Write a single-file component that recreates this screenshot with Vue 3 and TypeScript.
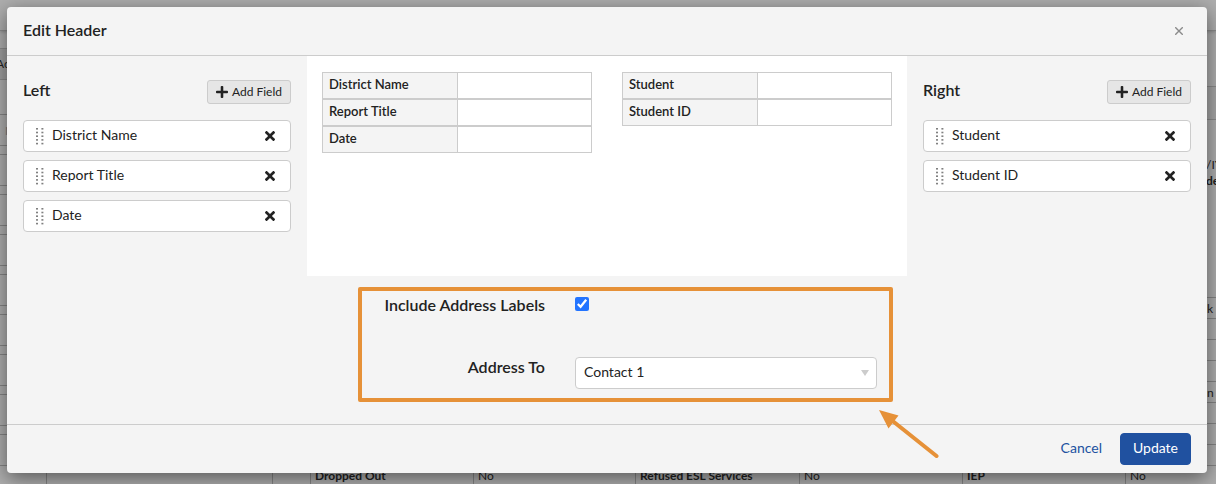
<script setup lang="ts">
import { ref } from 'vue'

interface Side {
  title: string
  fields: string[]
}

const left = ref<Side>({ title: 'Left', fields: ['District Name', 'Report Title', 'Date'] })
const right = ref<Side>({ title: 'Right', fields: ['Student', 'Student ID'] })
const includeLabels = ref(true)
const addressTo = ref('Contact 1')

const leftCells = ['N', '', '', '', '', '', '', '', '']
const rightCells = ['k', '', '', '', 'n .', '', '', '']

function removeField(side: Side, index: number): void {
  side.fields.splice(index, 1)
}

function addField(side: Side): void {
  side.fields.push('Date')
}
</script>

<template>
  <div class="page">
    <div class="underlay" aria-hidden="true">
      <div class="topbar"></div>
      <div class="behind">
        <div class="behind-left">
          <div class="behind-head">Ac</div>
          <div v-for="(cell, i) in leftCells" :key="i" class="left-cell">{{ cell }}</div>
        </div>
        <div class="behind-right">
          <div class="right-head"></div>
          <div class="right-info">/IY<br /><b>de</b></div>
          <div v-for="(cell, i) in rightCells" :key="i" class="right-cell">{{ cell }}</div>
        </div>
      </div>
      <div class="behind-row">
        <span class="blank-a"></span>
        <span class="blank-b"></span>
        <span class="blank-c"></span>
        <b>Dropped Out</b><span>No</span>
        <b>Refused ESL Services</b><span>No</span>
        <b>IEP</b><span>No</span>
      </div>
    </div>

    <div class="modal" role="dialog" aria-labelledby="dialog-title">
      <header class="modal-header">
        <h1 id="dialog-title">Edit Header</h1>
        <button class="close" type="button" aria-label="Close">
          <svg viewBox="0 0 8 8" width="8" height="8"><path d="M0.2 0.2 7.8 7.8M7.8 0.2 0.2 7.8" /></svg>
        </button>
      </header>

      <div class="modal-body">
        <section v-for="side in [left, right]" :key="side.title" class="side" :class="side.title.toLowerCase()">
          <div class="side-head">
            <h2>{{ side.title }}</h2>
            <button class="add" type="button" @click="addField(side)">
              <svg viewBox="0 32 448 448" width="12" height="12">
                <path d="M416 208H272V64c0-17.67-14.33-32-32-32h-32c-17.67 0-32 14.33-32 32v144H32c-17.67 0-32 14.33-32 32v32c0 17.67 14.33 32 32 32h144v144c0 17.67 14.33 32 32 32h32c17.67 0 32-14.33 32-32V304h144c17.67 0 32-14.33 32-32v-32c0-17.67-14.33-32-32-32z" />
              </svg>
              <span>Add Field</span>
            </button>
          </div>
          <ul class="fields">
            <li v-for="(field, i) in side.fields" :key="field">
              <svg class="grip" viewBox="0 0 8 17" width="8" height="17">
                <template v-for="row in 5" :key="row">
                  <rect x="0" :y="(row - 1) * 3.7" width="2" height="1.6" />
                  <rect x="5.4" :y="(row - 1) * 3.7" width="2" height="1.6" />
                </template>
              </svg>
              <span class="name">{{ field }}</span>
              <button class="remove" type="button" :aria-label="'Remove ' + field" @click="removeField(side, i)">
                <svg viewBox="0 80 352 352" width="10" height="10">
                  <path d="M242.72 256l100.07-100.07c12.28-12.28 12.28-32.19 0-44.48l-22.24-22.24c-12.28-12.28-32.19-12.28-44.48 0L176 189.28 75.93 89.21c-12.28-12.28-32.19-12.28-44.48 0L9.21 111.45c-12.28 12.28-12.28 32.19 0 44.48L109.28 256 9.21 356.07c-12.28 12.28-12.28 32.19 0 44.48l22.24 22.24c12.28 12.28 32.2 12.28 44.48 0L176 322.72l100.07 100.07c12.28 12.28 32.2 12.28 44.48 0l22.24-22.24c12.28-12.28 12.28-32.19 0-44.48L242.72 256z" />
                </svg>
              </button>
            </li>
          </ul>
        </section>

        <section class="center">
          <div class="preview">
            <div v-for="side in [left, right]" :key="side.title">
              <table>
                <tbody>
                  <tr v-for="field in side.fields" :key="field">
                    <th scope="row">{{ field }}</th>
                    <td></td>
                  </tr>
                </tbody>
              </table>
            </div>
          </div>
          <form class="options" @submit.prevent>
            <label for="include">Include Address Labels</label>
            <input id="include" v-model="includeLabels" type="checkbox" />
            <label for="address">Address To</label>
            <div class="select">
              <select id="address" v-model="addressTo">
                <option>Contact 1</option>
                <option>Contact 2</option>
              </select>
              <svg viewBox="0 0 8 6" width="8" height="6"><path d="M0 0h8L4 6z" /></svg>
            </div>
            <svg class="arrow" viewBox="0 0 60 49" width="60" height="49">
              <path class="shaft" d="M13 10.5 57.5 46" />
              <path class="head" d="M0 0 19.5 5.5 9.5 18.5z" />
            </svg>
          </form>
        </section>
      </div>

      <footer class="modal-footer">
        <button class="cancel" type="button">Cancel</button>
        <button class="update" type="button">Update</button>
      </footer>
    </div>
  </div>
</template>

<style>
body {
  margin: 0;
  background: #aeaeae;
}
</style>

<style scoped>
.page {
  position: relative;
  box-sizing: border-box;
  min-height: 100vh;
  padding: 7px 9px 11px 7px;
  overflow: hidden;
  font-family: Lato, "Open Sans", sans-serif;
  font-size: 14px;
  line-height: 20px;
  color: #222;
}

h1,
h2,
ul,
form {
  margin: 0;
  padding: 0;
}

button,
select {
  font: inherit;
  color: inherit;
  cursor: pointer;
}

svg {
  display: block;
  flex: none;
}

/* Page behind the dialog */
.underlay {
  position: absolute;
  inset: 0;
  display: flex;
  flex-direction: column;
  overflow: hidden;
  background: #aeaeae;
  font-size: 12px;
  line-height: 16px;
}

.topbar {
  flex: none;
  height: 30px;
  border-bottom: 1px solid #8b8b8b;
  box-shadow: 0 1px 3px rgba(0, 0, 0, 0.2);
}

.behind {
  display: flex;
  justify-content: space-between;
  height: 434px;
}

.behind-left {
  width: 46px;
}

.behind-head {
  height: 30px;
  margin: 17px 0 34px;
  border: 1px solid #8b8b8b;
  border-width: 1px 0;
  background: #9f9f9f;
  line-height: 30px;
  text-indent: -4px;
}

.left-cell {
  height: 30px;
  margin-bottom: 8px;
  border: 1px solid #858585;
  border-width: 1px 0;
  line-height: 32px;
  text-indent: 5px;
  color: #777;
}

.behind-right {
  width: 10px;
  white-space: nowrap;
}

.right-head {
  height: 32px;
  margin: 55px 0 37px;
  border: 1px solid #8b8b8b;
  border-width: 1px 0;
  background: #a6a6a6;
}

.right-info {
  height: 140px;
}

.right-cell {
  height: 20px;
  border-top: 1px solid #858585;
  padding-left: 1px;
  line-height: 22px;
}

.behind-row {
  display: grid;
  grid-template-columns: 46px 226px 38px 163fr 162fr 164fr 163fr 163fr 91fr;
  flex: 1;
  border-top: 1px solid #858585;
}

.behind-row > * {
  padding: 2px 4px;
  border-left: 1px solid #858585;
}

.behind-row > .blank-a {
  border-left: 0;
}

/* Dialog */
.modal {
  position: relative;
  border-radius: 4px;
  background: #f4f4f4;
  box-shadow: 0 5px 20px rgba(0, 0, 0, 0.5);
}

.modal-header {
  display: flex;
  align-items: center;
  justify-content: space-between;
  height: 48px;
  padding: 0 16px;
  border-bottom: 1px solid #ccc;
}

h1,
h2,
.options label {
  font-size: 16px;
  font-weight: 600;
  line-height: 20px;
}

h1 {
  padding-bottom: 2px;
}

.close {
  padding: 8px;
  border: 0;
  background: none;
}

.close path {
  fill: none;
  stroke: #8a8a8a;
  stroke-width: 1.4;
}

.modal-body {
  display: grid;
  grid-template-columns: 1fr 2fr 1fr;
  min-height: 368px;
}

.side {
  grid-row: 1;
  padding: 24px 16px;
}

.side.left {
  grid-column: 1;
}

.side.right {
  grid-column: 3;
}

.center {
  grid-row: 1;
  grid-column: 2;
}

.side-head {
  display: flex;
  align-items: flex-start;
  justify-content: space-between;
  margin-bottom: 16px;
}

.add {
  display: flex;
  align-items: center;
  gap: 4px;
  height: 24px;
  padding: 0 8px;
  border: 1px solid #ccc;
  border-radius: 3px;
  background: #e6e6e6;
  font-size: 12px;
}

.add path,
.remove path {
  fill: #222;
}

.fields {
  display: grid;
  gap: 8px;
  list-style: none;
}

.fields li {
  display: flex;
  align-items: center;
  gap: 8px;
  height: 30px;
  padding: 0 8px 0 12px;
  border: 1px solid #ccc;
  border-radius: 4px;
  background: #fff;
}

.grip {
  fill: #808080;
}

.name {
  flex: 1;
  padding-bottom: 2px;
}

.remove {
  padding: 7px;
  border: 0;
  background: none;
}

.preview {
  display: grid;
  grid-template-columns: 1fr 1fr;
  gap: 30px;
  min-height: 188px;
  padding: 16px 15px;
  background: #fff;
}

table {
  width: 100%;
  border-spacing: 0;
  table-layout: fixed;
  font-size: 13px;
  line-height: 17px;
}

th,
td {
  height: 17px;
  padding: 3px 6px 5px;
  border: 1px solid #ccc;
}

th {
  border-right: 0;
  background: #f4f4f4;
  font-weight: 600;
  text-align: left;
}

.options {
  position: relative;
  display: grid;
  grid-template-columns: 183fr 302fr;
  column-gap: 30px;
  row-gap: 42px;
  margin: 11px 14px 0 51px;
  padding: 4px 12px 9px 0;
  border: 4px solid #e69138;
  border-radius: 2px;
}

.options label {
  text-align: right;
}

.options input {
  width: 14px;
  height: 14px;
  margin: 2px 0 0;
  accent-color: #2374ff;
}

.select {
  position: relative;
  height: 32px;
}

.select select {
  width: 100%;
  height: 32px;
  padding: 0 24px 2px 8px;
  border: 1px solid #ccc;
  border-radius: 4px;
  background: #fff;
  appearance: none;
}

.select svg {
  position: absolute;
  top: 13px;
  right: 8px;
  fill: #ccc;
  pointer-events: none;
}

.arrow {
  position: absolute;
  top: 119px;
  right: -50px;
  z-index: 1;
  pointer-events: none;
}

.arrow .shaft {
  fill: none;
  stroke: #e69138;
  stroke-width: 4;
  stroke-linecap: round;
}

.arrow .head {
  fill: #e69138;
}

.modal-footer {
  display: flex;
  align-items: center;
  justify-content: flex-end;
  gap: 5px;
  height: 48px;
  padding: 0 16px;
  border-top: 1px solid #ccc;
}

.modal-footer button {
  height: 32px;
  padding: 0 12px 2px;
  border: 1px solid transparent;
  border-radius: 4px;
}

.cancel {
  background: none;
  color: #2051a0;
}

.modal-footer .update {
  border-color: #2051a0;
  background: #2051a0;
  color: #fff;
}
</style>
